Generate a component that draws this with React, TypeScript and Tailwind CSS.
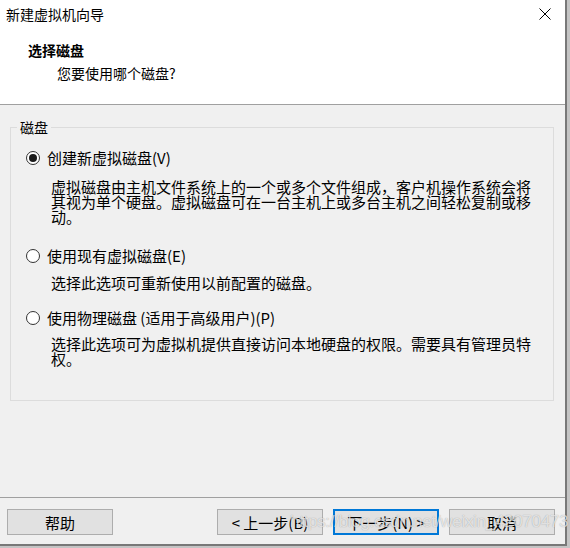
const font = "font-['Noto_Sans_CJK_SC','Microsoft_YaHei',sans-serif]"

type Opt = { label: string; desc: string; checked?: boolean; rowMt: string; descMt: string }

const options: Opt[] = [
  {
    label: "创建新虚拟磁盘(V)",
    desc: "虚拟磁盘由主机文件系统上的一个或多个文件组成，客户机操作系统会将其视为单个硬盘。虚拟磁盘可在一台主机上或多台主机之间轻松复制或移动。",
    checked: true,
    rowMt: "mt-[15px]",
    descMt: "mt-[13px]",
  },
  {
    label: "使用现有虚拟磁盘(E)",
    desc: "选择此选项可重新使用以前配置的磁盘。",
    rowMt: "mt-[24px]",
    descMt: "mt-[11px]",
  },
  {
    label: "使用物理磁盘 (适用于高级用户)(P)",
    desc: "选择此选项可为虚拟机提供直接访问本地硬盘的权限。需要具有管理员特权。",
    rowMt: "mt-[20px]",
    descMt: "mt-[10px]",
  },
]

function Radio({ checked }: { checked?: boolean }) {
  return (
    <span className="w-[14px] h-[14px] rounded-full border border-[#333] bg-white flex items-center justify-center shrink-0">
      {checked && <span className="w-[8px] h-[8px] rounded-full bg-[#1a1a1a]" />}
    </span>
  )
}

function Btn({ children, primary }: { children: React.ReactNode; primary?: boolean }) {
  return (
    <button
      className={
        primary
          ? "w-[106px] h-[26px] bg-[#e1e1e1] border-2 border-[#0078d7] text-[15px] leading-none text-black"
          : "w-[106px] h-[26px] bg-[#e1e1e1] border border-[#adadad] text-[15px] leading-none text-black"
      }
    >
      {children}
    </button>
  )
}

export default function App() {
  return (
    <div className={`w-[570px] h-[548px] bg-[#c4c4c4] overflow-hidden ${font}`}>
      <div className="w-[567px] h-[546px] border-r-2 border-b-2 border-[#787878] bg-[#f0f0f0] flex flex-col relative">
        {/* header */}
        <div className="h-[105px] bg-white border-b border-[#a0a0a0] shrink-0">
          <div className="h-[28px] flex items-center justify-between pl-[6px] pr-[14px]">
            <span className="text-[14px] leading-[16px] text-black">新建虚拟机向导</span>
            <svg width="12" height="12" viewBox="0 0 12 12">
              <path d="M0.5 0.5 L11.5 11.5 M11.5 0.5 L0.5 11.5" stroke="#000" strokeWidth="1" fill="none" />
            </svg>
          </div>
          <div className="mt-[12px] pl-[28px] text-[14px] leading-[20px] font-bold text-black">选择磁盘</div>
          <div className="mt-[3px] pl-[57px] text-[14px] leading-[20px] text-black">您要使用哪个磁盘?</div>
        </div>

        {/* body */}
        <div className="flex-1">
          <fieldset className="mt-[14px] ml-[10px] w-[544px] border border-[#dcdcdc] pl-[6px] pb-[34px]">
            <legend className="px-[3px] text-[14px] leading-[16px] text-black">磁盘</legend>
            <div className="pl-[9px]">
              {options.map((o) => (
                <div key={o.label}>
                  <div className={`${o.rowMt} flex items-center gap-[7px] h-[16px]`}>
                    <Radio checked={o.checked} />
                    <span className="text-[15px] leading-[16px] text-black whitespace-nowrap">{o.label}</span>
                  </div>
                  <p className={`${o.descMt} ml-[25px] w-[484px] text-[15px] leading-[15px] text-black`}>{o.desc}</p>
                </div>
              ))}
            </div>
          </fieldset>
        </div>

        {/* footer */}
        <div className="h-[47px] shrink-0 border-t border-[#a0a0a0] pt-[11px] pl-[7px] pr-[10px] flex items-start justify-between">
          <Btn>帮助</Btn>
          <div className="flex gap-[10px]">
            <Btn>&lt; 上一步(B)</Btn>
            <Btn primary>下一步(N) &gt;</Btn>
            <Btn>取消</Btn>
          </div>
        </div>

        {/* csdn watermark */}
        <span className="absolute left-[290px] top-[511px] text-[17px] leading-[22px] tracking-[-0.3px] text-white/70 font-['Liberation_Sans',sans-serif] [text-shadow:0_0_1px_rgba(0,0,0,0.35)] pointer-events-none whitespace-nowrap">
          https://blog.csdn.net/weixin_42070473
        </span>
      </div>
    </div>
  )
}
